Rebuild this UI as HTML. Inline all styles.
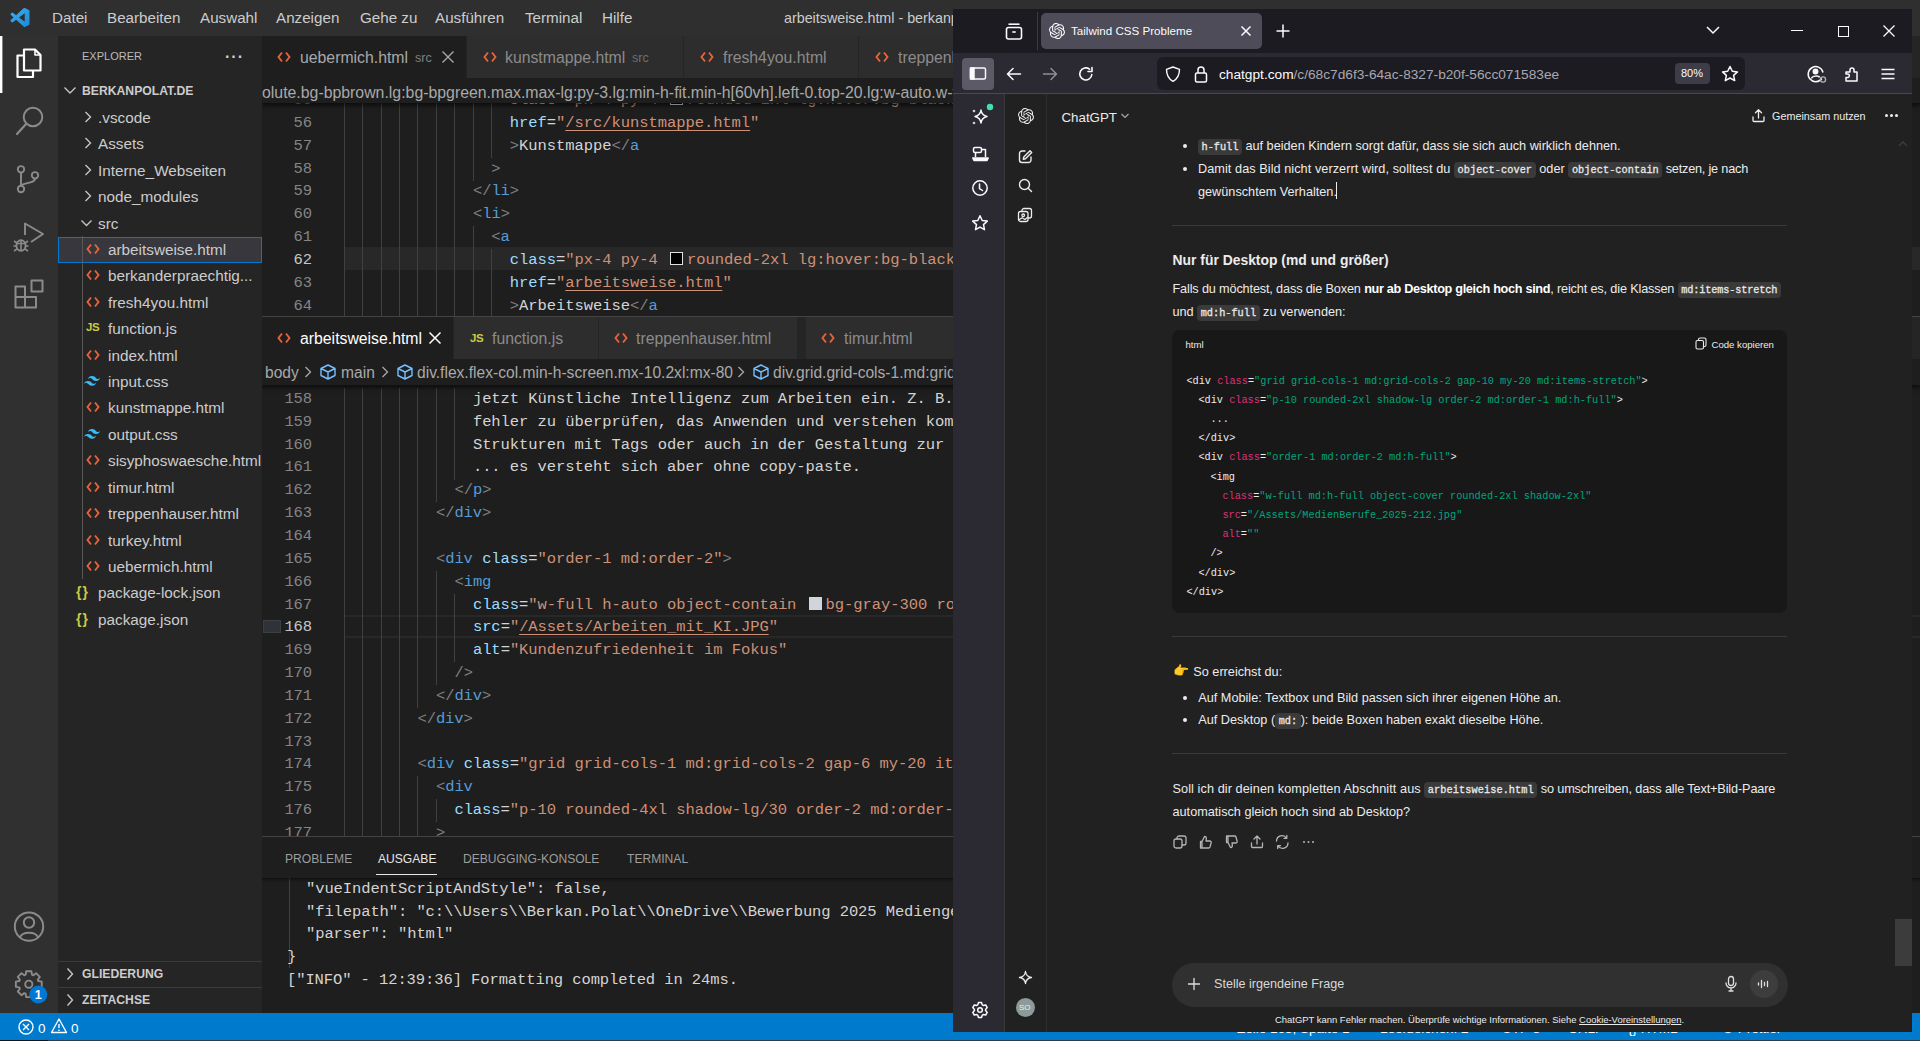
<!DOCTYPE html>
<html><head><meta charset="utf-8">
<style>
*{margin:0;padding:0;box-sizing:border-box}
html,body{width:1920px;height:1041px;overflow:hidden;background:#1e1e1e;font-family:"Liberation Sans",sans-serif;position:relative}
.a{position:absolute}
.t{position:absolute;white-space:pre;line-height:1}
.mono{font-family:"Liberation Mono",monospace}
/* vscode */
#title{left:0;top:0;width:1920px;height:36px;background:#2f2f2f}
#menu .t{top:10px;font-size:15.2px;color:#cccccc}
#act{left:0;top:36px;width:58px;height:977px;background:#303030}
#side{left:58px;top:36px;width:204px;height:977px;background:#252526}
#status{left:0;top:1013px;width:1920px;height:28px;background:#007acc}
.tree .t{font-size:15.3px;color:#cccccc}
.tabt{font-size:15.8px}
.crumb{font-size:15.6px;color:#a9a9a9}
.ptab{font-size:12.1px;margin-top:0.5px}
.ln{position:absolute;left:262px;width:50px;text-align:right;white-space:pre;font-family:"Liberation Mono",monospace;font-size:15.5px;letter-spacing:-0.1px;line-height:22.85px}
.cl{position:absolute;white-space:pre;font-family:"Liberation Mono",monospace;font-size:15.5px;letter-spacing:-0.06px;line-height:22.85px}
.pl{letter-spacing:-0.1px}
.cbox{display:inline-block;width:13px;height:13px;border:1px solid #fff;margin:0 4px 0 3px;vertical-align:-1px}
.body{font-size:12.7px;color:#ececec;margin-top:0.8px}
.body b{font-weight:700;color:#fff;letter-spacing:-0.32px}
.chip{font-family:"Liberation Mono",monospace;font-size:10.25px;background:#3a3a3a;border-radius:4px;padding:2px 3.5px;color:#e8e8e8;-webkit-text-stroke:0.3px #e8e8e8}
.bul{position:absolute;left:1182.5px;width:4.5px;height:4.5px;border-radius:50%;background:#ececec}
.hr{position:absolute;left:1172px;width:615px;height:1px;background:#3a3a3a}
.code div{position:absolute;white-space:pre;font-family:"Liberation Mono",monospace;font-size:10.25px;line-height:12px;margin-top:0.6px}
.code .w{color:#ececec}.code .r{color:#df3079}.code .g{color:#00a67d}
</style></head><body>

<!-- ============ VS CODE ============ -->
<div id="title" class="a"></div>
<svg class="a" style="left:10px;top:8px" width="20" height="19" viewBox="0 0 100 100"><defs><linearGradient id="vg" x1="0" y1="0" x2="1" y2="1"><stop offset="0" stop-color="#3fb0f0"/><stop offset="1" stop-color="#1a8ad8"/></linearGradient></defs><path fill="url(#vg)" fill-rule="evenodd" d="M70.912 99.572a6.2 6.2 0 0 0 4.97-.19l20.588-9.908a6.25 6.25 0 0 0 3.53-5.632V16.157a6.25 6.25 0 0 0-3.53-5.632L75.882.617a6.226 6.226 0 0 0-7.104 1.21L29.367 37.78 12.2 24.75a4.162 4.162 0 0 0-5.318.236l-5.507 5.009a4.168 4.168 0 0 0-.004 6.162L16.255 50 1.371 63.576a4.168 4.168 0 0 0 .004 6.162l5.507 5.009a4.162 4.162 0 0 0 5.318.236l17.167-13.03 39.41 35.954a6.218 6.218 0 0 0 2.135 1.365zm4.104-72.414L45.11 50l29.906 22.843V27.158z"/></svg>
<div id="menu">
  <div class="t" style="left:52px">Datei</div>
  <div class="t" style="left:107px">Bearbeiten</div>
  <div class="t" style="left:200px">Auswahl</div>
  <div class="t" style="left:276px">Anzeigen</div>
  <div class="t" style="left:360px">Gehe zu</div>
  <div class="t" style="left:435px">Ausführen</div>
  <div class="t" style="left:525px">Terminal</div>
  <div class="t" style="left:602px">Hilfe</div>
  <div class="t" style="left:784px;top:11px;font-size:14.3px">arbeitsweise.html - berkanpolat.de - Visual Studio Code</div>
</div>
<div id="act" class="a"></div>
<div id="side" class="a"></div>

<svg class="a" style="left:0;top:36px" width="58" height="977" viewBox="0 36 58 977" fill="none" stroke-linejoin="round">
  <rect x="0" y="36" width="2.4" height="57" fill="#ffffff" stroke="none"/>
  <path d="M23 55.5 H17.5 V77 H33 V71" stroke="#fff" stroke-width="2.2"/>
  <path d="M24 49.5 H35 L40.5 55 V70.5 H24 Z" stroke="#fff" stroke-width="2.2"/>
  <path d="M35 49.5 V55 H40.5" stroke="#fff" stroke-width="1.6"/>
  <circle cx="33" cy="117" r="9.3" stroke="#8b8b8b" stroke-width="2"/>
  <path d="M26.3 123.7 L17 134" stroke="#8b8b8b" stroke-width="2.2" stroke-linecap="round"/>
  <circle cx="21" cy="169.3" r="3.2" stroke="#8b8b8b" stroke-width="1.9"/>
  <circle cx="35" cy="175.3" r="3.2" stroke="#8b8b8b" stroke-width="1.9"/>
  <circle cx="21" cy="189" r="3.2" stroke="#8b8b8b" stroke-width="1.9"/>
  <path d="M21 172.5 V185.8 M35 178.5 C35 183 28 182 21.5 185" stroke="#8b8b8b" stroke-width="1.9"/>
  <path d="M25 235 V223.5 L43 234 L31 242" stroke="#8b8b8b" stroke-width="1.9"/>
  <ellipse cx="21" cy="245.5" rx="4.6" ry="5.2" stroke="#8b8b8b" stroke-width="1.9"/>
  <path d="M14 241 L17 243 M28 241 L25 243 M13.5 246 H16.5 M25.5 246 H28.5 M14 251 L17 249 M28 251 L25 249 M21 240 V250 M17 243.5 H25" stroke="#8b8b8b" stroke-width="1.6"/>
  <path d="M15.5 286.5 H25 V307.5 H15.5 Z M15.5 297 H36 V307.5 H25" stroke="#8b8b8b" stroke-width="2"/>
  <rect x="31.5" y="280.5" width="11" height="11" stroke="#8b8b8b" stroke-width="2"/>
  <circle cx="29" cy="926.6" r="14.2" stroke="#8b8b8b" stroke-width="2"/>
  <circle cx="29" cy="922.5" r="5.2" stroke="#8b8b8b" stroke-width="2"/>
  <path d="M20 937.5 C22 931 36 931 38 937.5" stroke="#8b8b8b" stroke-width="2"/>
  <path d="M25.65 974.71 L26.18 971.26 L31.42 971.26 L31.95 974.71 L33.29 975.26 L36.09 973.20 L39.80 976.91 L37.74 979.71 L38.29 981.05 L41.74 981.58 L41.74 986.82 L38.29 987.35 L37.74 988.69 L39.80 991.49 L36.09 995.20 L33.29 993.14 L31.95 993.69 L31.42 997.14 L26.18 997.14 L25.65 993.69 L24.31 993.14 L21.51 995.20 L17.80 991.49 L19.86 988.69 L19.31 987.35 L15.86 986.82 L15.86 981.58 L19.31 981.05 L19.86 979.71 L17.80 976.91 L21.51 973.20 L24.31 975.26 Z" stroke="#8b8b8b" stroke-width="1.9"/>
  <circle cx="28.8" cy="984.2" r="3.6" stroke="#8b8b8b" stroke-width="1.9"/>
  <circle cx="38.3" cy="994.5" r="9" fill="#0078d4" stroke="none"/>
  <text x="38.3" y="999.3" font-family="Liberation Sans" font-size="12.5" font-weight="700" fill="#fff" text-anchor="middle" stroke="none">1</text>
</svg>


<div class="tree">
  <div class="t" style="left:82px;top:51px;font-size:11px;color:#bbbbbb">EXPLORER</div>
  <div class="t" style="left:225px;top:49px;font-size:16px;color:#cccccc;font-weight:700;letter-spacing:1px">···</div>
  <svg class="a" style="left:62px;top:80px" width="16" height="20" fill="none" stroke="#c5c5c5" stroke-width="1.4"><path d="M2.5 7.5 L8 13 L13.5 7.5"/></svg>
  <div class="t" style="left:82px;top:85px;font-size:12.2px;font-weight:700;color:#cccccc">BERKANPOLAT.DE</div>
  <div class="a" style="left:58px;top:236.5px;width:204px;height:26px;background:#37373d;border:1px solid #0078d4"></div>
  <div class="a" style="left:82px;top:236px;width:1px;height:343px;background:#585858"></div>
  <svg class="a" style="left:82px;top:103.8px" width="12" height="26" fill="none" stroke="#c5c5c5" stroke-width="1.4"><path d="M3.5 8 L8.5 13 L3.5 18"/></svg><div class="t" style="left:98px;top:104.8px;line-height:26.4px">.vscode</div><svg class="a" style="left:82px;top:130.2px" width="12" height="26" fill="none" stroke="#c5c5c5" stroke-width="1.4"><path d="M3.5 8 L8.5 13 L3.5 18"/></svg><div class="t" style="left:98px;top:131.2px;line-height:26.4px">Assets</div><svg class="a" style="left:82px;top:156.6px" width="12" height="26" fill="none" stroke="#c5c5c5" stroke-width="1.4"><path d="M3.5 8 L8.5 13 L3.5 18"/></svg><div class="t" style="left:98px;top:157.6px;line-height:26.4px">Interne_Webseiten</div><svg class="a" style="left:82px;top:183.1px" width="12" height="26" fill="none" stroke="#c5c5c5" stroke-width="1.4"><path d="M3.5 8 L8.5 13 L3.5 18"/></svg><div class="t" style="left:98px;top:184.1px;line-height:26.4px">node_modules</div><svg class="a" style="left:80px;top:209.5px" width="14" height="26" fill="none" stroke="#c5c5c5" stroke-width="1.4"><path d="M1.5 10.5 L6.5 15.5 L11.5 10.5"/></svg><div class="t" style="left:98px;top:210.5px;line-height:26.4px">src</div><svg class="a" style="left:85px;top:235.9px" width="16" height="26" fill="none" stroke="#e8623a" stroke-width="1.9"><path d="M6 8.5 L2.5 13 L6 17.5 M10 8.5 L13.5 13 L10 17.5"/></svg><div class="t" style="left:108px;top:236.9px;line-height:26.4px">arbeitsweise.html</div><svg class="a" style="left:85px;top:262.3px" width="16" height="26" fill="none" stroke="#e8623a" stroke-width="1.9"><path d="M6 8.5 L2.5 13 L6 17.5 M10 8.5 L13.5 13 L10 17.5"/></svg><div class="t" style="left:108px;top:263.3px;line-height:26.4px">berkanderpraechtig...</div><svg class="a" style="left:85px;top:288.7px" width="16" height="26" fill="none" stroke="#e8623a" stroke-width="1.9"><path d="M6 8.5 L2.5 13 L6 17.5 M10 8.5 L13.5 13 L10 17.5"/></svg><div class="t" style="left:108px;top:289.7px;line-height:26.4px">fresh4you.html</div><div class="t" style="left:86px;top:322.2px;font-size:11.5px;font-weight:700;color:#cbcb41;letter-spacing:-0.5px">JS</div><div class="t" style="left:108px;top:316.2px;line-height:26.4px">function.js</div><svg class="a" style="left:85px;top:341.6px" width="16" height="26" fill="none" stroke="#e8623a" stroke-width="1.9"><path d="M6 8.5 L2.5 13 L6 17.5 M10 8.5 L13.5 13 L10 17.5"/></svg><div class="t" style="left:108px;top:342.6px;line-height:26.4px">index.html</div><svg class="a" style="left:83.5px;top:375.8px" width="16" height="10" viewBox="0 0 54 33"><path fill="#38bdf8" d="M27 0C19.8 0 15.3 3.6 13.5 10.8c2.7-3.6 5.85-4.95 9.45-4.05 2.054.513 3.522 2.004 5.147 3.653C30.744 13.09 33.808 16.2 40.5 16.2c7.2 0 11.7-3.6 13.5-10.8-2.7 3.6-5.85 4.95-9.45 4.050-2.054-.513-3.522-2.004-5.147-3.653C36.756 3.110 33.692 0 27 0zM13.5 16.2C6.3 16.2 1.8 19.8 0 27c2.7-3.6 5.85-4.95 9.45-4.05 2.054.514 3.522 2.004 5.147 3.653C17.244 29.290 20.308 32.4 27 32.4c7.2 0 11.7-3.6 13.5-10.8-2.7 3.6-5.85 4.95-9.45 4.05-2.054-.513-3.522-2.004-5.147-3.653C23.256 19.310 20.192 16.2 13.5 16.2z"/></svg><div class="t" style="left:108px;top:369.0px;line-height:26.4px">input.css</div><svg class="a" style="left:85px;top:394.4px" width="16" height="26" fill="none" stroke="#e8623a" stroke-width="1.9"><path d="M6 8.5 L2.5 13 L6 17.5 M10 8.5 L13.5 13 L10 17.5"/></svg><div class="t" style="left:108px;top:395.4px;line-height:26.4px">kunstmappe.html</div><svg class="a" style="left:83.5px;top:428.6px" width="16" height="10" viewBox="0 0 54 33"><path fill="#38bdf8" d="M27 0C19.8 0 15.3 3.6 13.5 10.8c2.7-3.6 5.85-4.95 9.45-4.05 2.054.513 3.522 2.004 5.147 3.653C30.744 13.09 33.808 16.2 40.5 16.2c7.2 0 11.7-3.6 13.5-10.8-2.7 3.6-5.85 4.95-9.45 4.050-2.054-.513-3.522-2.004-5.147-3.653C36.756 3.110 33.692 0 27 0zM13.5 16.2C6.3 16.2 1.8 19.8 0 27c2.7-3.6 5.85-4.95 9.45-4.05 2.054.514 3.522 2.004 5.147 3.653C17.244 29.290 20.308 32.4 27 32.4c7.2 0 11.7-3.6 13.5-10.8-2.7 3.6-5.85 4.95-9.45 4.05-2.054-.513-3.522-2.004-5.147-3.653C23.256 19.310 20.192 16.2 13.5 16.2z"/></svg><div class="t" style="left:108px;top:421.8px;line-height:26.4px">output.css</div><svg class="a" style="left:85px;top:447.3px" width="16" height="26" fill="none" stroke="#e8623a" stroke-width="1.9"><path d="M6 8.5 L2.5 13 L6 17.5 M10 8.5 L13.5 13 L10 17.5"/></svg><div class="t" style="left:108px;top:448.3px;line-height:26.4px">sisyphoswaesche.html</div><svg class="a" style="left:85px;top:473.7px" width="16" height="26" fill="none" stroke="#e8623a" stroke-width="1.9"><path d="M6 8.5 L2.5 13 L6 17.5 M10 8.5 L13.5 13 L10 17.5"/></svg><div class="t" style="left:108px;top:474.7px;line-height:26.4px">timur.html</div><svg class="a" style="left:85px;top:500.1px" width="16" height="26" fill="none" stroke="#e8623a" stroke-width="1.9"><path d="M6 8.5 L2.5 13 L6 17.5 M10 8.5 L13.5 13 L10 17.5"/></svg><div class="t" style="left:108px;top:501.1px;line-height:26.4px">treppenhauser.html</div><svg class="a" style="left:85px;top:526.5px" width="16" height="26" fill="none" stroke="#e8623a" stroke-width="1.9"><path d="M6 8.5 L2.5 13 L6 17.5 M10 8.5 L13.5 13 L10 17.5"/></svg><div class="t" style="left:108px;top:527.5px;line-height:26.4px">turkey.html</div><svg class="a" style="left:85px;top:552.9px" width="16" height="26" fill="none" stroke="#e8623a" stroke-width="1.9"><path d="M6 8.5 L2.5 13 L6 17.5 M10 8.5 L13.5 13 L10 17.5"/></svg><div class="t" style="left:108px;top:553.9px;line-height:26.4px">uebermich.html</div><div class="t" style="left:76px;top:585.4px;font-size:14px;font-weight:700;color:#cbcb41;letter-spacing:1px">{}</div><div class="t" style="left:98px;top:580.4px;line-height:26.4px">package-lock.json</div><div class="t" style="left:76px;top:611.8px;font-size:14px;font-weight:700;color:#cbcb41;letter-spacing:1px">{}</div><div class="t" style="left:98px;top:606.8px;line-height:26.4px">package.json</div>
  <div class="a" style="left:58px;top:961px;width:204px;height:1px;background:#3c3c3c"></div>
  <svg class="a" style="left:62px;top:964px" width="16" height="20" fill="none" stroke="#c5c5c5" stroke-width="1.4"><path d="M5.5 4.5 L10.5 10 L5.5 15.5"/></svg>
  <div class="t" style="left:82px;top:968px;font-size:12.2px;font-weight:700;color:#cccccc">GLIEDERUNG</div>
  <div class="a" style="left:58px;top:987px;width:204px;height:1px;background:#3c3c3c"></div>
  <svg class="a" style="left:62px;top:990px" width="16" height="20" fill="none" stroke="#c5c5c5" stroke-width="1.4"><path d="M5.5 4.5 L10.5 10 L5.5 15.5"/></svg>
  <div class="t" style="left:82px;top:994px;font-size:12.2px;font-weight:700;color:#cccccc">ZEITACHSE</div>
</div>
<!--EDITOR-->
<!-- top editor group -->
<div class="a" style="left:262px;top:36px;width:1658px;height:42px;background:#252526"></div>
<div class="a" style="left:262px;top:36px;width:204px;height:42px;background:#1e1e1e"></div>
<div class="a" style="left:467px;top:36px;width:216px;height:42px;background:#2d2d2d"></div>
<div class="a" style="left:684px;top:36px;width:174px;height:42px;background:#2d2d2d"></div>
<div class="a" style="left:859px;top:36px;width:200px;height:42px;background:#2d2d2d"></div>
<svg class="a" style="left:276px;top:44px" width="16" height="26" fill="none" stroke="#e8623a" stroke-width="1.9"><path d="M6 8.5 L2.5 13 L6 17.5 M10 8.5 L13.5 13 L10 17.5"/></svg>
<div class="t tabt" style="left:300px;top:50px;color:#a8a8a8">uebermich.html</div>
<div class="t" style="left:415px;top:52px;font-size:12.5px;color:#7f7f7f">src</div>
<svg class="a" style="left:440px;top:49px" width="16" height="16" fill="none" stroke="#a8a8a8" stroke-width="1.4"><path d="M2.5 2.5 L13.5 13.5 M13.5 2.5 L2.5 13.5"/></svg>
<svg class="a" style="left:482px;top:44px" width="16" height="26" fill="none" stroke="#e8623a" stroke-width="1.9"><path d="M6 8.5 L2.5 13 L6 17.5 M10 8.5 L13.5 13 L10 17.5"/></svg>
<div class="t tabt" style="left:505px;top:50px;color:#8b8b8b">kunstmappe.html</div>
<div class="t" style="left:632px;top:52px;font-size:12.5px;color:#6e6e6e">src</div>
<svg class="a" style="left:699px;top:44px" width="16" height="26" fill="none" stroke="#e8623a" stroke-width="1.9"><path d="M6 8.5 L2.5 13 L6 17.5 M10 8.5 L13.5 13 L10 17.5"/></svg>
<div class="t tabt" style="left:723px;top:50px;color:#8b8b8b">fresh4you.html</div>
<svg class="a" style="left:874px;top:44px" width="16" height="26" fill="none" stroke="#e8623a" stroke-width="1.9"><path d="M6 8.5 L2.5 13 L6 17.5 M10 8.5 L13.5 13 L10 17.5"/></svg>
<div class="t tabt" style="left:898px;top:50px;color:#8b8b8b">treppenhauser.html</div>
<div class="a" style="left:262px;top:78px;width:1658px;height:239px;background:#1e1e1e;overflow:hidden">
  <div class="a" style="left:-262px;top:-78px;width:1920px;height:1041px">
    <div class="a" style="left:343.5px;top:246.7px;width:1600px;height:22.85px;background:#282828"></div>
    <!--TOPCODE--><div class="a" style="left:343.5px;top:89.02px;width:1px;height:23.15px;background:#404040"></div><div class="a" style="left:362.0px;top:89.02px;width:1px;height:23.15px;background:#404040"></div><div class="a" style="left:380.5px;top:89.02px;width:1px;height:23.15px;background:#404040"></div><div class="a" style="left:398.9px;top:89.02px;width:1px;height:23.15px;background:#404040"></div><div class="a" style="left:417.4px;top:89.02px;width:1px;height:23.15px;background:#404040"></div><div class="a" style="left:435.9px;top:89.02px;width:1px;height:23.15px;background:#404040"></div><div class="a" style="left:454.4px;top:89.02px;width:1px;height:23.15px;background:#404040"></div><div class="a" style="left:472.9px;top:89.02px;width:1px;height:23.15px;background:#404040"></div><div class="a" style="left:491.3px;top:89.02px;width:1px;height:23.15px;background:#404040"></div><div class="a" style="left:343.5px;top:111.88px;width:1px;height:23.15px;background:#404040"></div><div class="a" style="left:362.0px;top:111.88px;width:1px;height:23.15px;background:#404040"></div><div class="a" style="left:380.5px;top:111.88px;width:1px;height:23.15px;background:#404040"></div><div class="a" style="left:398.9px;top:111.88px;width:1px;height:23.15px;background:#404040"></div><div class="a" style="left:417.4px;top:111.88px;width:1px;height:23.15px;background:#404040"></div><div class="a" style="left:435.9px;top:111.88px;width:1px;height:23.15px;background:#404040"></div><div class="a" style="left:454.4px;top:111.88px;width:1px;height:23.15px;background:#404040"></div><div class="a" style="left:472.9px;top:111.88px;width:1px;height:23.15px;background:#404040"></div><div class="a" style="left:491.3px;top:111.88px;width:1px;height:23.15px;background:#404040"></div><div class="a" style="left:343.5px;top:134.72px;width:1px;height:23.15px;background:#404040"></div><div class="a" style="left:362.0px;top:134.72px;width:1px;height:23.15px;background:#404040"></div><div class="a" style="left:380.5px;top:134.72px;width:1px;height:23.15px;background:#404040"></div><div class="a" style="left:398.9px;top:134.72px;width:1px;height:23.15px;background:#404040"></div><div class="a" style="left:417.4px;top:134.72px;width:1px;height:23.15px;background:#404040"></div><div class="a" style="left:435.9px;top:134.72px;width:1px;height:23.15px;background:#404040"></div><div class="a" style="left:454.4px;top:134.72px;width:1px;height:23.15px;background:#404040"></div><div class="a" style="left:472.9px;top:134.72px;width:1px;height:23.15px;background:#404040"></div><div class="a" style="left:491.3px;top:134.72px;width:1px;height:23.15px;background:#404040"></div><div class="a" style="left:343.5px;top:157.57px;width:1px;height:23.15px;background:#404040"></div><div class="a" style="left:362.0px;top:157.57px;width:1px;height:23.15px;background:#404040"></div><div class="a" style="left:380.5px;top:157.57px;width:1px;height:23.15px;background:#404040"></div><div class="a" style="left:398.9px;top:157.57px;width:1px;height:23.15px;background:#404040"></div><div class="a" style="left:417.4px;top:157.57px;width:1px;height:23.15px;background:#404040"></div><div class="a" style="left:435.9px;top:157.57px;width:1px;height:23.15px;background:#404040"></div><div class="a" style="left:454.4px;top:157.57px;width:1px;height:23.15px;background:#404040"></div><div class="a" style="left:472.9px;top:157.57px;width:1px;height:23.15px;background:#404040"></div><div class="a" style="left:343.5px;top:180.43px;width:1px;height:23.15px;background:#404040"></div><div class="a" style="left:362.0px;top:180.43px;width:1px;height:23.15px;background:#404040"></div><div class="a" style="left:380.5px;top:180.43px;width:1px;height:23.15px;background:#404040"></div><div class="a" style="left:398.9px;top:180.43px;width:1px;height:23.15px;background:#404040"></div><div class="a" style="left:417.4px;top:180.43px;width:1px;height:23.15px;background:#404040"></div><div class="a" style="left:435.9px;top:180.43px;width:1px;height:23.15px;background:#404040"></div><div class="a" style="left:454.4px;top:180.43px;width:1px;height:23.15px;background:#404040"></div><div class="a" style="left:343.5px;top:203.27px;width:1px;height:23.15px;background:#404040"></div><div class="a" style="left:362.0px;top:203.27px;width:1px;height:23.15px;background:#404040"></div><div class="a" style="left:380.5px;top:203.27px;width:1px;height:23.15px;background:#404040"></div><div class="a" style="left:398.9px;top:203.27px;width:1px;height:23.15px;background:#404040"></div><div class="a" style="left:417.4px;top:203.27px;width:1px;height:23.15px;background:#404040"></div><div class="a" style="left:435.9px;top:203.27px;width:1px;height:23.15px;background:#404040"></div><div class="a" style="left:454.4px;top:203.27px;width:1px;height:23.15px;background:#404040"></div><div class="a" style="left:343.5px;top:226.12px;width:1px;height:23.15px;background:#404040"></div><div class="a" style="left:362.0px;top:226.12px;width:1px;height:23.15px;background:#404040"></div><div class="a" style="left:380.5px;top:226.12px;width:1px;height:23.15px;background:#404040"></div><div class="a" style="left:398.9px;top:226.12px;width:1px;height:23.15px;background:#404040"></div><div class="a" style="left:417.4px;top:226.12px;width:1px;height:23.15px;background:#404040"></div><div class="a" style="left:435.9px;top:226.12px;width:1px;height:23.15px;background:#404040"></div><div class="a" style="left:454.4px;top:226.12px;width:1px;height:23.15px;background:#404040"></div><div class="a" style="left:472.9px;top:226.12px;width:1px;height:23.15px;background:#404040"></div><div class="a" style="left:343.5px;top:248.98px;width:1px;height:23.15px;background:#404040"></div><div class="a" style="left:362.0px;top:248.98px;width:1px;height:23.15px;background:#404040"></div><div class="a" style="left:380.5px;top:248.98px;width:1px;height:23.15px;background:#404040"></div><div class="a" style="left:398.9px;top:248.98px;width:1px;height:23.15px;background:#404040"></div><div class="a" style="left:417.4px;top:248.98px;width:1px;height:23.15px;background:#404040"></div><div class="a" style="left:435.9px;top:248.98px;width:1px;height:23.15px;background:#404040"></div><div class="a" style="left:454.4px;top:248.98px;width:1px;height:23.15px;background:#404040"></div><div class="a" style="left:472.9px;top:248.98px;width:1px;height:23.15px;background:#404040"></div><div class="a" style="left:491.3px;top:248.98px;width:1px;height:23.15px;background:#404040"></div><div class="a" style="left:343.5px;top:271.82px;width:1px;height:23.15px;background:#404040"></div><div class="a" style="left:362.0px;top:271.82px;width:1px;height:23.15px;background:#404040"></div><div class="a" style="left:380.5px;top:271.82px;width:1px;height:23.15px;background:#404040"></div><div class="a" style="left:398.9px;top:271.82px;width:1px;height:23.15px;background:#404040"></div><div class="a" style="left:417.4px;top:271.82px;width:1px;height:23.15px;background:#404040"></div><div class="a" style="left:435.9px;top:271.82px;width:1px;height:23.15px;background:#404040"></div><div class="a" style="left:454.4px;top:271.82px;width:1px;height:23.15px;background:#404040"></div><div class="a" style="left:472.9px;top:271.82px;width:1px;height:23.15px;background:#404040"></div><div class="a" style="left:491.3px;top:271.82px;width:1px;height:23.15px;background:#404040"></div><div class="a" style="left:343.5px;top:294.68px;width:1px;height:23.15px;background:#404040"></div><div class="a" style="left:362.0px;top:294.68px;width:1px;height:23.15px;background:#404040"></div><div class="a" style="left:380.5px;top:294.68px;width:1px;height:23.15px;background:#404040"></div><div class="a" style="left:398.9px;top:294.68px;width:1px;height:23.15px;background:#404040"></div><div class="a" style="left:417.4px;top:294.68px;width:1px;height:23.15px;background:#404040"></div><div class="a" style="left:435.9px;top:294.68px;width:1px;height:23.15px;background:#404040"></div><div class="a" style="left:454.4px;top:294.68px;width:1px;height:23.15px;background:#404040"></div><div class="a" style="left:472.9px;top:294.68px;width:1px;height:23.15px;background:#404040"></div><div class="a" style="left:491.3px;top:294.68px;width:1px;height:23.15px;background:#404040"></div><div class="ln" style="top:89.02px;color:#858585">55</div><div class="cl" style="left:509.8px;top:89.02px"><span style="color:#9cdcfe">class</span><span style="color:#d4d4d4">=</span><span style="color:#ce9178">&quot;px-4 py-4 </span><span class="cbox" style="background:#000;border-color:#e0e0e0"></span><span style="color:#ce9178">rounded-2xl lg:hover:bg-black</span></div><div class="ln" style="top:111.88px;color:#858585">56</div><div class="cl" style="left:509.8px;top:111.88px"><span style="color:#9cdcfe">href</span><span style="color:#d4d4d4">=</span><span style="color:#ce9178">&quot;</span><span style="color:#ce9178;text-decoration:underline;text-underline-offset:3px;text-decoration-thickness:1px">/src/kunstmappe.html</span><span style="color:#ce9178">&quot;</span></div><div class="ln" style="top:134.72px;color:#858585">57</div><div class="cl" style="left:509.8px;top:134.72px"><span style="color:#808080">&gt;</span><span style="color:#d4d4d4">Kunstmappe</span><span style="color:#808080">&lt;/</span><span style="color:#569cd6">a</span></div><div class="ln" style="top:157.57px;color:#858585">58</div><div class="cl" style="left:491.3px;top:157.57px"><span style="color:#808080">&gt;</span></div><div class="ln" style="top:180.43px;color:#858585">59</div><div class="cl" style="left:472.9px;top:180.43px"><span style="color:#808080">&lt;/</span><span style="color:#569cd6">li</span><span style="color:#808080">&gt;</span></div><div class="ln" style="top:203.27px;color:#858585">60</div><div class="cl" style="left:472.9px;top:203.27px"><span style="color:#808080">&lt;</span><span style="color:#569cd6">li</span><span style="color:#808080">&gt;</span></div><div class="ln" style="top:226.12px;color:#858585">61</div><div class="cl" style="left:491.3px;top:226.12px"><span style="color:#808080">&lt;</span><span style="color:#569cd6">a</span></div><div class="ln" style="top:248.98px;color:#c6c6c6">62</div><div class="cl" style="left:509.8px;top:248.98px"><span style="color:#9cdcfe">class</span><span style="color:#d4d4d4">=</span><span style="color:#ce9178">&quot;px-4 py-4 </span><span class="cbox" style="background:#000;border-color:#e0e0e0"></span><span style="color:#ce9178">rounded-2xl lg:hover:bg-black</span></div><div class="ln" style="top:271.82px;color:#858585">63</div><div class="cl" style="left:509.8px;top:271.82px"><span style="color:#9cdcfe">href</span><span style="color:#d4d4d4">=</span><span style="color:#ce9178">&quot;</span><span style="color:#ce9178;text-decoration:underline;text-underline-offset:3px;text-decoration-thickness:1px">arbeitsweise.html</span><span style="color:#ce9178">&quot;</span></div><div class="ln" style="top:294.68px;color:#858585">64</div><div class="cl" style="left:509.8px;top:294.68px"><span style="color:#808080">&gt;</span><span style="color:#d4d4d4">Arbeitsweise</span><span style="color:#808080">&lt;/</span><span style="color:#569cd6">a</span></div><!--/TOPCODE-->
  </div>
  <div class="a" style="left:0;top:0;width:1658px;height:25px;background:#1e1e1e;box-shadow:0 3px 4px rgba(0,0,0,0.55)"></div>
  <div class="t crumb" style="left:0;top:6.5px;font-size:15.85px">olute.bg-bpbrown.lg:bg-bpgreen.max.max-lg:py-3.lg:min-h-fit.min-h[60vh].left-0.top-20.lg:w-auto.w-full.lg:bg-bpgreen</div>
</div>
<div class="a" style="left:262px;top:316px;width:1658px;height:1px;background:#444444"></div>

<!-- bottom editor group -->
<div class="a" style="left:262px;top:317px;width:1658px;height:42px;background:#252526"></div>
<div class="a" style="left:262px;top:317px;width:191px;height:42px;background:#1e1e1e"></div>
<div class="a" style="left:454px;top:317px;width:144px;height:42px;background:#2d2d2d"></div>
<div class="a" style="left:599px;top:317px;width:198px;height:42px;background:#2d2d2d"></div>
<div class="a" style="left:806px;top:317px;width:160px;height:42px;background:#2d2d2d"></div>
<svg class="a" style="left:276px;top:325px" width="16" height="26" fill="none" stroke="#e8623a" stroke-width="1.9"><path d="M6 8.5 L2.5 13 L6 17.5 M10 8.5 L13.5 13 L10 17.5"/></svg>
<div class="t tabt" style="left:300px;top:331px;color:#ffffff">arbeitsweise.html</div>
<svg class="a" style="left:427px;top:330px" width="16" height="16" fill="none" stroke="#ffffff" stroke-width="1.5"><path d="M2.5 2.5 L13.5 13.5 M13.5 2.5 L2.5 13.5"/></svg>
<div class="t" style="left:470px;top:333px;font-size:11.5px;font-weight:700;color:#cbcb41;letter-spacing:-0.5px">JS</div>
<div class="t tabt" style="left:492px;top:331px;color:#8b8b8b">function.js</div>
<svg class="a" style="left:613px;top:325px" width="16" height="26" fill="none" stroke="#e8623a" stroke-width="1.9"><path d="M6 8.5 L2.5 13 L6 17.5 M10 8.5 L13.5 13 L10 17.5"/></svg>
<div class="t tabt" style="left:636px;top:331px;color:#8b8b8b">treppenhauser.html</div>
<svg class="a" style="left:820px;top:325px" width="16" height="26" fill="none" stroke="#e8623a" stroke-width="1.9"><path d="M6 8.5 L2.5 13 L6 17.5 M10 8.5 L13.5 13 L10 17.5"/></svg>
<div class="t tabt" style="left:844px;top:331px;color:#8b8b8b">timur.html</div>
<div class="a" style="left:262px;top:359px;width:1658px;height:477px;background:#1e1e1e;overflow:hidden">
  <div class="a" style="left:-262px;top:-359px;width:1920px;height:1041px">
    <div class="a" style="left:343.5px;top:614.7px;width:1600px;height:22.85px;border-top:2px solid #282828;border-bottom:2px solid #282828"></div>
    <div class="a" style="left:263px;top:620px;width:18px;height:13px;background:#2f3337;border:1px solid #3a3f44"></div>
    <!--BOTCODE--><div class="a" style="left:343.5px;top:387.88px;width:1px;height:23.15px;background:#404040"></div><div class="a" style="left:362.0px;top:387.88px;width:1px;height:23.15px;background:#404040"></div><div class="a" style="left:380.5px;top:387.88px;width:1px;height:23.15px;background:#404040"></div><div class="a" style="left:398.9px;top:387.88px;width:1px;height:23.15px;background:#404040"></div><div class="a" style="left:417.4px;top:387.88px;width:1px;height:23.15px;background:#404040"></div><div class="a" style="left:435.9px;top:387.88px;width:1px;height:23.15px;background:#404040"></div><div class="a" style="left:454.4px;top:387.88px;width:1px;height:23.15px;background:#404040"></div><div class="a" style="left:343.5px;top:410.73px;width:1px;height:23.15px;background:#404040"></div><div class="a" style="left:362.0px;top:410.73px;width:1px;height:23.15px;background:#404040"></div><div class="a" style="left:380.5px;top:410.73px;width:1px;height:23.15px;background:#404040"></div><div class="a" style="left:398.9px;top:410.73px;width:1px;height:23.15px;background:#404040"></div><div class="a" style="left:417.4px;top:410.73px;width:1px;height:23.15px;background:#404040"></div><div class="a" style="left:435.9px;top:410.73px;width:1px;height:23.15px;background:#404040"></div><div class="a" style="left:454.4px;top:410.73px;width:1px;height:23.15px;background:#404040"></div><div class="a" style="left:343.5px;top:433.57px;width:1px;height:23.15px;background:#404040"></div><div class="a" style="left:362.0px;top:433.57px;width:1px;height:23.15px;background:#404040"></div><div class="a" style="left:380.5px;top:433.57px;width:1px;height:23.15px;background:#404040"></div><div class="a" style="left:398.9px;top:433.57px;width:1px;height:23.15px;background:#404040"></div><div class="a" style="left:417.4px;top:433.57px;width:1px;height:23.15px;background:#404040"></div><div class="a" style="left:435.9px;top:433.57px;width:1px;height:23.15px;background:#404040"></div><div class="a" style="left:454.4px;top:433.57px;width:1px;height:23.15px;background:#404040"></div><div class="a" style="left:343.5px;top:456.43px;width:1px;height:23.15px;background:#404040"></div><div class="a" style="left:362.0px;top:456.43px;width:1px;height:23.15px;background:#404040"></div><div class="a" style="left:380.5px;top:456.43px;width:1px;height:23.15px;background:#404040"></div><div class="a" style="left:398.9px;top:456.43px;width:1px;height:23.15px;background:#404040"></div><div class="a" style="left:417.4px;top:456.43px;width:1px;height:23.15px;background:#404040"></div><div class="a" style="left:435.9px;top:456.43px;width:1px;height:23.15px;background:#404040"></div><div class="a" style="left:454.4px;top:456.43px;width:1px;height:23.15px;background:#404040"></div><div class="a" style="left:343.5px;top:479.27px;width:1px;height:23.15px;background:#404040"></div><div class="a" style="left:362.0px;top:479.27px;width:1px;height:23.15px;background:#404040"></div><div class="a" style="left:380.5px;top:479.27px;width:1px;height:23.15px;background:#404040"></div><div class="a" style="left:398.9px;top:479.27px;width:1px;height:23.15px;background:#404040"></div><div class="a" style="left:417.4px;top:479.27px;width:1px;height:23.15px;background:#404040"></div><div class="a" style="left:435.9px;top:479.27px;width:1px;height:23.15px;background:#404040"></div><div class="a" style="left:343.5px;top:502.12px;width:1px;height:23.15px;background:#404040"></div><div class="a" style="left:362.0px;top:502.12px;width:1px;height:23.15px;background:#404040"></div><div class="a" style="left:380.5px;top:502.12px;width:1px;height:23.15px;background:#404040"></div><div class="a" style="left:398.9px;top:502.12px;width:1px;height:23.15px;background:#404040"></div><div class="a" style="left:417.4px;top:502.12px;width:1px;height:23.15px;background:#404040"></div><div class="a" style="left:343.5px;top:524.98px;width:1px;height:23.15px;background:#404040"></div><div class="a" style="left:362.0px;top:524.98px;width:1px;height:23.15px;background:#404040"></div><div class="a" style="left:380.5px;top:524.98px;width:1px;height:23.15px;background:#404040"></div><div class="a" style="left:398.9px;top:524.98px;width:1px;height:23.15px;background:#404040"></div><div class="a" style="left:417.4px;top:524.98px;width:1px;height:23.15px;background:#404040"></div><div class="a" style="left:343.5px;top:547.83px;width:1px;height:23.15px;background:#404040"></div><div class="a" style="left:362.0px;top:547.83px;width:1px;height:23.15px;background:#404040"></div><div class="a" style="left:380.5px;top:547.83px;width:1px;height:23.15px;background:#404040"></div><div class="a" style="left:398.9px;top:547.83px;width:1px;height:23.15px;background:#404040"></div><div class="a" style="left:417.4px;top:547.83px;width:1px;height:23.15px;background:#404040"></div><div class="a" style="left:343.5px;top:570.67px;width:1px;height:23.15px;background:#404040"></div><div class="a" style="left:362.0px;top:570.67px;width:1px;height:23.15px;background:#404040"></div><div class="a" style="left:380.5px;top:570.67px;width:1px;height:23.15px;background:#404040"></div><div class="a" style="left:398.9px;top:570.67px;width:1px;height:23.15px;background:#404040"></div><div class="a" style="left:417.4px;top:570.67px;width:1px;height:23.15px;background:#404040"></div><div class="a" style="left:435.9px;top:570.67px;width:1px;height:23.15px;background:#404040"></div><div class="a" style="left:343.5px;top:593.52px;width:1px;height:23.15px;background:#404040"></div><div class="a" style="left:362.0px;top:593.52px;width:1px;height:23.15px;background:#404040"></div><div class="a" style="left:380.5px;top:593.52px;width:1px;height:23.15px;background:#404040"></div><div class="a" style="left:398.9px;top:593.52px;width:1px;height:23.15px;background:#404040"></div><div class="a" style="left:417.4px;top:593.52px;width:1px;height:23.15px;background:#404040"></div><div class="a" style="left:435.9px;top:593.52px;width:1px;height:23.15px;background:#404040"></div><div class="a" style="left:454.4px;top:593.52px;width:1px;height:23.15px;background:#404040"></div><div class="a" style="left:343.5px;top:616.38px;width:1px;height:23.15px;background:#404040"></div><div class="a" style="left:362.0px;top:616.38px;width:1px;height:23.15px;background:#404040"></div><div class="a" style="left:380.5px;top:616.38px;width:1px;height:23.15px;background:#404040"></div><div class="a" style="left:398.9px;top:616.38px;width:1px;height:23.15px;background:#404040"></div><div class="a" style="left:417.4px;top:616.38px;width:1px;height:23.15px;background:#404040"></div><div class="a" style="left:435.9px;top:616.38px;width:1px;height:23.15px;background:#404040"></div><div class="a" style="left:454.4px;top:616.38px;width:1px;height:23.15px;background:#404040"></div><div class="a" style="left:343.5px;top:639.23px;width:1px;height:23.15px;background:#404040"></div><div class="a" style="left:362.0px;top:639.23px;width:1px;height:23.15px;background:#404040"></div><div class="a" style="left:380.5px;top:639.23px;width:1px;height:23.15px;background:#404040"></div><div class="a" style="left:398.9px;top:639.23px;width:1px;height:23.15px;background:#404040"></div><div class="a" style="left:417.4px;top:639.23px;width:1px;height:23.15px;background:#404040"></div><div class="a" style="left:435.9px;top:639.23px;width:1px;height:23.15px;background:#404040"></div><div class="a" style="left:454.4px;top:639.23px;width:1px;height:23.15px;background:#404040"></div><div class="a" style="left:343.5px;top:662.08px;width:1px;height:23.15px;background:#404040"></div><div class="a" style="left:362.0px;top:662.08px;width:1px;height:23.15px;background:#404040"></div><div class="a" style="left:380.5px;top:662.08px;width:1px;height:23.15px;background:#404040"></div><div class="a" style="left:398.9px;top:662.08px;width:1px;height:23.15px;background:#404040"></div><div class="a" style="left:417.4px;top:662.08px;width:1px;height:23.15px;background:#404040"></div><div class="a" style="left:435.9px;top:662.08px;width:1px;height:23.15px;background:#404040"></div><div class="a" style="left:343.5px;top:684.92px;width:1px;height:23.15px;background:#404040"></div><div class="a" style="left:362.0px;top:684.92px;width:1px;height:23.15px;background:#404040"></div><div class="a" style="left:380.5px;top:684.92px;width:1px;height:23.15px;background:#404040"></div><div class="a" style="left:398.9px;top:684.92px;width:1px;height:23.15px;background:#404040"></div><div class="a" style="left:417.4px;top:684.92px;width:1px;height:23.15px;background:#404040"></div><div class="a" style="left:343.5px;top:707.78px;width:1px;height:23.15px;background:#404040"></div><div class="a" style="left:362.0px;top:707.78px;width:1px;height:23.15px;background:#404040"></div><div class="a" style="left:380.5px;top:707.78px;width:1px;height:23.15px;background:#404040"></div><div class="a" style="left:398.9px;top:707.78px;width:1px;height:23.15px;background:#404040"></div><div class="a" style="left:343.5px;top:730.62px;width:1px;height:23.15px;background:#404040"></div><div class="a" style="left:362.0px;top:730.62px;width:1px;height:23.15px;background:#404040"></div><div class="a" style="left:380.5px;top:730.62px;width:1px;height:23.15px;background:#404040"></div><div class="a" style="left:398.9px;top:730.62px;width:1px;height:23.15px;background:#404040"></div><div class="a" style="left:343.5px;top:753.48px;width:1px;height:23.15px;background:#404040"></div><div class="a" style="left:362.0px;top:753.48px;width:1px;height:23.15px;background:#404040"></div><div class="a" style="left:380.5px;top:753.48px;width:1px;height:23.15px;background:#404040"></div><div class="a" style="left:398.9px;top:753.48px;width:1px;height:23.15px;background:#404040"></div><div class="a" style="left:343.5px;top:776.33px;width:1px;height:23.15px;background:#404040"></div><div class="a" style="left:362.0px;top:776.33px;width:1px;height:23.15px;background:#404040"></div><div class="a" style="left:380.5px;top:776.33px;width:1px;height:23.15px;background:#404040"></div><div class="a" style="left:398.9px;top:776.33px;width:1px;height:23.15px;background:#404040"></div><div class="a" style="left:417.4px;top:776.33px;width:1px;height:23.15px;background:#404040"></div><div class="a" style="left:343.5px;top:799.17px;width:1px;height:23.15px;background:#404040"></div><div class="a" style="left:362.0px;top:799.17px;width:1px;height:23.15px;background:#404040"></div><div class="a" style="left:380.5px;top:799.17px;width:1px;height:23.15px;background:#404040"></div><div class="a" style="left:398.9px;top:799.17px;width:1px;height:23.15px;background:#404040"></div><div class="a" style="left:417.4px;top:799.17px;width:1px;height:23.15px;background:#404040"></div><div class="a" style="left:435.9px;top:799.17px;width:1px;height:23.15px;background:#404040"></div><div class="a" style="left:343.5px;top:822.03px;width:1px;height:23.15px;background:#404040"></div><div class="a" style="left:362.0px;top:822.03px;width:1px;height:23.15px;background:#404040"></div><div class="a" style="left:380.5px;top:822.03px;width:1px;height:23.15px;background:#404040"></div><div class="a" style="left:398.9px;top:822.03px;width:1px;height:23.15px;background:#404040"></div><div class="a" style="left:417.4px;top:822.03px;width:1px;height:23.15px;background:#404040"></div><div class="ln" style="top:387.88px;color:#858585">158</div><div class="cl" style="left:472.9px;top:387.88px"><span style="color:#d4d4d4">jetzt Künstliche Intelligenz zum Arbeiten ein. Z. B. die Code</span></div><div class="ln" style="top:410.73px;color:#858585">159</div><div class="cl" style="left:472.9px;top:410.73px"><span style="color:#d4d4d4">fehler zu überprüfen, das Anwenden und verstehen komplexer</span></div><div class="ln" style="top:433.57px;color:#858585">160</div><div class="cl" style="left:472.9px;top:433.57px"><span style="color:#d4d4d4">Strukturen mit Tags oder auch in der Gestaltung zur Inspiration</span></div><div class="ln" style="top:456.43px;color:#858585">161</div><div class="cl" style="left:472.9px;top:456.43px"><span style="color:#d4d4d4">... es versteht sich aber ohne copy-paste.</span></div><div class="ln" style="top:479.27px;color:#858585">162</div><div class="cl" style="left:454.4px;top:479.27px"><span style="color:#808080">&lt;/</span><span style="color:#569cd6">p</span><span style="color:#808080">&gt;</span></div><div class="ln" style="top:502.12px;color:#858585">163</div><div class="cl" style="left:435.9px;top:502.12px"><span style="color:#808080">&lt;/</span><span style="color:#569cd6">div</span><span style="color:#808080">&gt;</span></div><div class="ln" style="top:524.98px;color:#858585">164</div><div class="ln" style="top:547.83px;color:#858585">165</div><div class="cl" style="left:435.9px;top:547.83px"><span style="color:#808080">&lt;</span><span style="color:#569cd6">div</span><span style="color:#d4d4d4"> </span><span style="color:#9cdcfe">class</span><span style="color:#d4d4d4">=</span><span style="color:#ce9178">&quot;order-1 md:order-2&quot;</span><span style="color:#808080">&gt;</span></div><div class="ln" style="top:570.67px;color:#858585">166</div><div class="cl" style="left:454.4px;top:570.67px"><span style="color:#808080">&lt;</span><span style="color:#569cd6">img</span></div><div class="ln" style="top:593.52px;color:#858585">167</div><div class="cl" style="left:472.9px;top:593.52px"><span style="color:#9cdcfe">class</span><span style="color:#d4d4d4">=</span><span style="color:#ce9178">&quot;w-full h-auto object-contain </span><span class="cbox" style="background:#d1d5db;border-color:#d1d5db"></span><span style="color:#ce9178">bg-gray-300 rounded-2xl</span></div><div class="ln" style="top:616.38px;color:#c6c6c6">168</div><div class="cl" style="left:472.9px;top:616.38px"><span style="color:#9cdcfe">src</span><span style="color:#d4d4d4">=</span><span style="color:#ce9178">&quot;</span><span style="color:#ce9178;text-decoration:underline;text-underline-offset:3px;text-decoration-thickness:1px">/Assets/Arbeiten_mit_KI.JPG</span><span style="color:#ce9178">&quot;</span></div><div class="ln" style="top:639.23px;color:#858585">169</div><div class="cl" style="left:472.9px;top:639.23px"><span style="color:#9cdcfe">alt</span><span style="color:#d4d4d4">=</span><span style="color:#ce9178">&quot;Kundenzufriedenheit im Fokus&quot;</span></div><div class="ln" style="top:662.08px;color:#858585">170</div><div class="cl" style="left:454.4px;top:662.08px"><span style="color:#808080">/&gt;</span></div><div class="ln" style="top:684.92px;color:#858585">171</div><div class="cl" style="left:435.9px;top:684.92px"><span style="color:#808080">&lt;/</span><span style="color:#569cd6">div</span><span style="color:#808080">&gt;</span></div><div class="ln" style="top:707.78px;color:#858585">172</div><div class="cl" style="left:417.4px;top:707.78px"><span style="color:#808080">&lt;/</span><span style="color:#569cd6">div</span><span style="color:#808080">&gt;</span></div><div class="ln" style="top:730.62px;color:#858585">173</div><div class="ln" style="top:753.48px;color:#858585">174</div><div class="cl" style="left:417.4px;top:753.48px"><span style="color:#808080">&lt;</span><span style="color:#569cd6">div</span><span style="color:#d4d4d4"> </span><span style="color:#9cdcfe">class</span><span style="color:#d4d4d4">=</span><span style="color:#ce9178">&quot;grid grid-cols-1 md:grid-cols-2 gap-6 my-20 items-center&quot;</span><span style="color:#808080">&gt;</span></div><div class="ln" style="top:776.33px;color:#858585">175</div><div class="cl" style="left:435.9px;top:776.33px"><span style="color:#808080">&lt;</span><span style="color:#569cd6">div</span></div><div class="ln" style="top:799.17px;color:#858585">176</div><div class="cl" style="left:454.4px;top:799.17px"><span style="color:#9cdcfe">class</span><span style="color:#d4d4d4">=</span><span style="color:#ce9178">&quot;p-10 rounded-4xl shadow-lg/30 order-2 md:order-1&quot;</span></div><div class="ln" style="top:822.03px;color:#858585">177</div><div class="cl" style="left:435.9px;top:822.03px"><span style="color:#808080">&gt;</span></div><!--/BOTCODE-->
  </div>
  <div class="a" style="left:0;top:0;width:1658px;height:26px;background:#1e1e1e;box-shadow:0 3px 4px rgba(0,0,0,0.55)"></div>
  <div class="t crumb" style="left:3px;top:6px">body</div>
  <svg class="a" style="left:40px;top:4px" width="12" height="18" fill="none" stroke="#a9a9a9" stroke-width="1.3"><path d="M3.5 4 L8.5 9 L3.5 14"/></svg>
  <svg class="a" style="left:57px;top:4px" width="18" height="18" fill="none" stroke="#75beff" stroke-width="1.4" stroke-linejoin="round"><path d="M9 2 L16 5.5 V12.5 L9 16 L2 12.5 V5.5 Z M2 5.5 L9 9 L16 5.5 M9 9 V16"/></svg>
  <div class="t crumb" style="left:79px;top:6px">main</div>
  <svg class="a" style="left:117px;top:4px" width="12" height="18" fill="none" stroke="#a9a9a9" stroke-width="1.3"><path d="M3.5 4 L8.5 9 L3.5 14"/></svg>
  <svg class="a" style="left:134px;top:4px" width="18" height="18" fill="none" stroke="#75beff" stroke-width="1.4" stroke-linejoin="round"><path d="M9 2 L16 5.5 V12.5 L9 16 L2 12.5 V5.5 Z M2 5.5 L9 9 L16 5.5 M9 9 V16"/></svg>
  <div class="t crumb" style="left:155px;top:6px">div.flex.flex-col.min-h-screen.mx-10.2xl:mx-80</div>
  <svg class="a" style="left:473px;top:4px" width="12" height="18" fill="none" stroke="#a9a9a9" stroke-width="1.3"><path d="M3.5 4 L8.5 9 L3.5 14"/></svg>
  <svg class="a" style="left:490px;top:4px" width="18" height="18" fill="none" stroke="#75beff" stroke-width="1.4" stroke-linejoin="round"><path d="M9 2 L16 5.5 V12.5 L9 16 L2 12.5 V5.5 Z M2 5.5 L9 9 L16 5.5 M9 9 V16"/></svg>
  <div class="t crumb" style="left:511px;top:6px">div.grid.grid-cols-1.md:grid-cols-2.gap-10.my-20</div>
</div>

<!-- panel -->
<div class="a" style="left:262px;top:836px;width:1658px;height:177px;background:#1e1e1e;border-top:1px solid #444"></div>
<div class="t ptab" style="left:285px;top:852px;color:#9d9d9d">PROBLEME</div>
<div class="t ptab" style="left:378px;top:852px;color:#e7e7e7">AUSGABE</div>
<div class="a" style="left:376px;top:873.5px;width:61px;height:1.5px;background:#e7e7e7"></div>
<div class="t ptab" style="left:463px;top:852px;color:#9d9d9d">DEBUGGING-KONSOLE</div>
<div class="t ptab" style="left:627px;top:852px;color:#9d9d9d">TERMINAL</div>
<div class="a" style="left:289px;top:878px;width:1px;height:90px;background:#404040"></div>
<div class="cl pl" style="left:306px;top:877.5px;color:#d4d4d4">"vueIndentScriptAndStyle": false,</div>
<div class="cl pl" style="left:306px;top:900.5px;color:#d4d4d4">"filepath": "c:\\Users\\Berkan.Polat\\OneDrive\\Bewerbung 2025 Mediengestalter\\berkanpolat.de\\src\\arbeitsweise.html",</div>
<div class="cl pl" style="left:306px;top:922.5px;color:#d4d4d4">"parser": "html"</div>
<div class="cl pl" style="left:287px;top:945.5px;color:#d4d4d4">}</div>
<div class="cl pl" style="left:287px;top:968.5px;color:#d4d4d4">["INFO" - 12:39:36] Formatting completed in 24ms.</div>
<div class="a" style="left:262px;top:878px;width:1658px;height:4px;background:linear-gradient(rgba(0,0,0,0.45),rgba(0,0,0,0))"></div>

<div id="status" class="a"></div>
<!-- status bar items -->
<svg class="a" style="left:17px;top:1018px" width="18" height="18" fill="none" stroke="#fff" stroke-width="1.4"><circle cx="9" cy="9" r="7"/><path d="M6 6 L12 12 M12 6 L6 12"/></svg>
<div class="t" style="left:38px;top:1022px;font-size:13.5px;color:#fff">0</div>
<svg class="a" style="left:50px;top:1017px" width="18" height="18" fill="none" stroke="#fff" stroke-width="1.4" stroke-linejoin="round"><path d="M9 2 L16.5 15.5 H1.5 Z M9 7 V11 M9 12.5 V14"/></svg>
<div class="t" style="left:71px;top:1022px;font-size:13.5px;color:#fff">0</div>
<div class="t" style="left:1237px;top:1022px;font-size:13.5px;color:#fff">Zeile 168, Spalte 1</div>
<div class="t" style="left:1380px;top:1022px;font-size:13.5px;color:#fff">Leerzeichen: 2</div>
<div class="t" style="left:1502px;top:1022px;font-size:13.5px;color:#fff">UTF-8</div>
<div class="t" style="left:1568px;top:1022px;font-size:13.5px;color:#fff">CRLF</div>
<div class="t" style="left:1628px;top:1022px;font-size:13.5px;color:#fff">{} HTML</div>
<div class="t" style="left:1722px;top:1022px;font-size:13.5px;color:#fff">⊘ Prettier</div>
<div class="a" style="left:0;top:1039.6px;width:48px;height:1.4px;background:#101418"></div>
<div class="a" style="left:48px;top:1039.6px;width:1872px;height:1.4px;background:#2e3a44"></div>



<!--BROWSER--><!-- ============ FIREFOX ============ -->
<div class="a" style="left:953px;top:9px;width:959px;height:1023px;background:#212121;overflow:hidden">
<div class="a" style="left:-953px;top:-9px;width:1920px;height:1041px">
  <!-- tab strip -->
  <div class="a" style="left:953px;top:9px;width:959px;height:44px;background:#1c1b22"></div>
  <svg class="a" style="left:1004px;top:21px" width="20" height="20" fill="none" stroke="#fbfbfe" stroke-width="1.6" stroke-linejoin="round"><path d="M4.5 3.2 H15.5"/><rect x="2.5" y="6.5" width="15" height="11.5" rx="2"/><path d="M8.3 11 H11.7"/></svg>
  <div class="a" style="left:1036.5px;top:12px;width:1px;height:38px;background:#3a3944"></div>
  <div class="a" style="left:1041px;top:13px;width:221px;height:36px;background:#4d4c58;border-radius:5px"></div>
  <svg class="a" style="left:1049px;top:23px" width="16" height="16" viewBox="0 0 24 24" fill="#fbfbfe"><path d="M22.282 9.821a5.985 5.985 0 0 0-.516-4.91 6.046 6.046 0 0 0-6.51-2.9A6.065 6.065 0 0 0 4.981 4.18a5.985 5.985 0 0 0-3.998 2.9 6.046 6.046 0 0 0 .743 7.097 5.98 5.98 0 0 0 .51 4.911 6.051 6.051 0 0 0 6.515 2.9A5.985 5.985 0 0 0 13.26 24a6.056 6.056 0 0 0 5.772-4.206 5.99 5.99 0 0 0 3.997-2.9 6.056 6.056 0 0 0-.747-7.073zM13.26 22.43a4.476 4.476 0 0 1-2.876-1.04l.141-.081 4.779-2.758a.795.795 0 0 0 .392-.681v-6.737l2.02 1.168a.071.071 0 0 1 .038.052v5.583a4.504 4.504 0 0 1-4.494 4.494zM3.6 18.304a4.47 4.47 0 0 1-.535-3.014l.142.085 4.783 2.759a.771.771 0 0 0 .78 0l5.843-3.369v2.332a.08.08 0 0 1-.033.062L9.74 19.95a4.5 4.5 0 0 1-6.14-1.646zM2.34 7.896a4.485 4.485 0 0 1 2.366-1.973V11.6a.766.766 0 0 0 .388.676l5.815 3.355-2.02 1.168a.076.076 0 0 1-.071 0l-4.83-2.786A4.504 4.504 0 0 1 2.34 7.872zm16.597 3.855l-5.833-3.387L15.119 7.2a.076.076 0 0 1 .071 0l4.83 2.791a4.494 4.494 0 0 1-.676 8.105v-5.678a.79.79 0 0 0-.407-.667zm2.01-3.023l-.141-.085-4.774-2.782a.776.776 0 0 0-.785 0L9.409 9.23V6.897a.066.066 0 0 1 .028-.061l4.83-2.787a4.5 4.5 0 0 1 6.68 4.66zm-12.64 4.135l-2.02-1.164a.08.08 0 0 1-.038-.057V6.075a4.5 4.5 0 0 1 7.375-3.453l-.142.08L8.704 5.46a.795.795 0 0 0-.393.681zm1.097-2.365l2.602-1.5 2.607 1.5v2.999l-2.597 1.5-2.607-1.5z"/></svg>
  <div class="t" style="left:1071px;top:25px;font-size:11.6px;color:#fbfbfe">Tailwind CSS Probleme</div>
  <svg class="a" style="left:1240px;top:25px" width="12" height="12" fill="none" stroke="#fbfbfe" stroke-width="1.5"><path d="M1.5 1.5 L10.5 10.5 M10.5 1.5 L1.5 10.5"/></svg>
  <svg class="a" style="left:1275px;top:23px" width="16" height="16" fill="none" stroke="#fbfbfe" stroke-width="1.5"><path d="M8 1.5 V14.5 M1.5 8 H14.5"/></svg>
  <svg class="a" style="left:1705px;top:24px" width="16" height="12" fill="none" stroke="#fbfbfe" stroke-width="1.5"><path d="M2 3 L8 9 L14 3"/></svg>
  <div class="a" style="left:1791px;top:30px;width:12px;height:1.3px;background:#fbfbfe"></div>
  <div class="a" style="left:1837.5px;top:25.5px;width:11px;height:11px;border:1.3px solid #fbfbfe"></div>
  <svg class="a" style="left:1882px;top:24px" width="14" height="14" fill="none" stroke="#fbfbfe" stroke-width="1.3"><path d="M1.5 1.5 L12.5 12.5 M12.5 1.5 L1.5 12.5"/></svg>

  <!-- nav bar -->
  <div class="a" style="left:953px;top:53px;width:959px;height:41px;background:#2b2a33;border-bottom:1px solid #4a4952"></div>
  <div class="a" style="left:962px;top:58px;width:32px;height:32px;background:#5b5a66;border-radius:4px"></div>
  <svg class="a" style="left:968px;top:65px" width="20" height="18" fill="none" stroke="#fbfbfe" stroke-width="1.5"><rect x="2.5" y="3" width="15" height="11" rx="1.5"/><rect x="2.5" y="3" width="3.5" height="11" fill="#fbfbfe"/></svg>
  <svg class="a" style="left:1005px;top:65px" width="18" height="18" fill="none" stroke="#fbfbfe" stroke-width="1.5" stroke-linejoin="round" stroke-linecap="round"><path d="M2.5 9 H15.5 M2.5 9 L8 3.5 M2.5 9 L8 14.5"/></svg>
  <svg class="a" style="left:1041px;top:65px" width="18" height="18" fill="none" stroke="#8f8f9d" stroke-width="1.5" stroke-linejoin="round" stroke-linecap="round"><path d="M15.5 9 H2.5 M15.5 9 L10 3.5 M15.5 9 L10 14.5"/></svg>
  <svg class="a" style="left:1077px;top:65px" width="18" height="18" fill="none" stroke="#fbfbfe" stroke-width="1.6" stroke-linecap="round"><path d="M14.8 9.5 A6 6 0 1 1 12.5 4.2"/><path d="M15 2.5 V6.5 H11" stroke-linejoin="round"/></svg>
  <div class="a" style="left:1157px;top:57px;width:588px;height:33px;background:#1c1b22;border-radius:6px"></div>
  <svg class="a" style="left:1164px;top:65px" width="18" height="18" fill="none" stroke="#fbfbfe" stroke-width="1.4" stroke-linejoin="round"><path d="M9 2 L15.5 4.3 C15.5 10.5 13.5 14 9 16.3 C4.5 14 2.5 10.5 2.5 4.3 Z"/></svg>
  <svg class="a" style="left:1193px;top:64px" width="16" height="20" fill="none" stroke="#fbfbfe" stroke-width="1.5"><rect x="2.5" y="9" width="11" height="9" rx="1.5"/><path d="M5 9 V6 A3 3 0 0 1 11 6 V9"/></svg>
  <div class="t" style="left:1219px;top:68px;font-size:13.7px;color:#fbfbfe">chatgpt.com<span style="color:#a8a8b0">/c/68c7d6f3-64ac-8327-b20f-56cc071583ee</span></div>
  <div class="a" style="left:1675px;top:63px;width:35px;height:21px;background:#3d3c47;border-radius:4px"></div>
  <div class="t" style="left:1681px;top:68px;font-size:11px;color:#fbfbfe">80%</div>
  <svg class="a" style="left:1720px;top:64px" width="20" height="20" fill="none" stroke="#fbfbfe" stroke-width="1.5" stroke-linejoin="round"><path d="M10 2.5 L12.3 7.3 L17.5 7.9 L13.6 11.4 L14.7 16.6 L10 14 L5.3 16.6 L6.4 11.4 L2.5 7.9 L7.7 7.3 Z"/></svg>
  <svg class="a" style="left:1806px;top:64px" width="22" height="20" fill="none" stroke="#fbfbfe" stroke-width="1.5"><path d="M15.8 14.5 A7.5 7.5 0 1 1 17 8.5"/><circle cx="9.5" cy="7.5" r="2.2" fill="#fbfbfe"/><path d="M5.5 14.5 C6 11.5 13 11.5 13.5 13.5" /><circle cx="17" cy="15.5" r="2.6" stroke="#b0b0b8" stroke-width="1.3"/></svg>
  <svg class="a" style="left:1843px;top:64px" width="20" height="20" fill="none" stroke="#fbfbfe" stroke-width="1.5" stroke-linejoin="round"><path d="M3 8 H7 V6 A2 2 0 0 1 11 6 V8 H14 V17 H3 V13.5 H5 A1.8 1.8 0 0 0 5 10 H3 Z"/></svg>
  <svg class="a" style="left:1879px;top:65px" width="18" height="18" fill="none" stroke="#fbfbfe" stroke-width="1.5"><path d="M2.5 4.5 H15.5 M2.5 9 H15.5 M2.5 13.5 H15.5"/></svg>

<!--CHAT-->  <!-- chatgpt page -->
  <div class="a" style="left:1004px;top:94px;width:908px;height:938px;background:#212121"></div>
  <div class="a" style="left:1046px;top:94px;width:1px;height:938px;background:#2e2e2e"></div>
  <div class="a" style="left:1004px;top:94px;width:1px;height:938px;background:#3a3a3a"></div>
  <svg class="a" style="left:1017.6px;top:108px" width="16" height="16" viewBox="0 0 24 24" fill="#ececec"><path d="M22.282 9.821a5.985 5.985 0 0 0-.516-4.91 6.046 6.046 0 0 0-6.51-2.9A6.065 6.065 0 0 0 4.981 4.18a5.985 5.985 0 0 0-3.998 2.9 6.046 6.046 0 0 0 .743 7.097 5.98 5.98 0 0 0 .51 4.911 6.051 6.051 0 0 0 6.515 2.9A5.985 5.985 0 0 0 13.26 24a6.056 6.056 0 0 0 5.772-4.206 5.99 5.99 0 0 0 3.997-2.9 6.056 6.056 0 0 0-.747-7.073zM13.26 22.43a4.476 4.476 0 0 1-2.876-1.04l.141-.081 4.779-2.758a.795.795 0 0 0 .392-.681v-6.737l2.02 1.168a.071.071 0 0 1 .038.052v5.583a4.504 4.504 0 0 1-4.494 4.494zM3.6 18.304a4.47 4.47 0 0 1-.535-3.014l.142.085 4.783 2.759a.771.771 0 0 0 .78 0l5.843-3.369v2.332a.08.08 0 0 1-.033.062L9.74 19.950a4.5 4.5 0 0 1-6.140-1.646zM2.34 7.896a4.485 4.485 0 0 1 2.366-1.973V11.6a.766.766 0 0 0 .388.676l5.815 3.355-2.020 1.168a.076.076 0 0 1-.071 0l-4.830-2.786A4.504 4.504 0 0 1 2.340 7.872zm16.597 3.855l-5.833-3.387L15.119 7.2a.076.076 0 0 1 .071 0l4.830 2.791a4.494 4.494 0 0 1-.676 8.105v-5.678a.790.790 0 0 0-.407-.667zm2.010-3.023l-.141-.085-4.774-2.782a.776.776 0 0 0-.785 0L9.409 9.230V6.897a.066.066 0 0 1 .028-.061l4.830-2.787a4.5 4.5 0 0 1 6.680 4.660zm-12.640 4.135l-2.020-1.164a.080.080 0 0 1-.038-.057V6.075a4.5 4.5 0 0 1 7.375-3.453l-.142.080L8.704 5.460a.795.795 0 0 0-.393.681zm1.097-2.365l2.602-1.5 2.607 1.5v2.999l-2.597 1.5-2.607-1.5z"/></svg>
  <svg class="a" style="left:1018px;top:149px" width="15" height="15" fill="none" stroke="#ececec" stroke-width="1.4" stroke-linecap="round" stroke-linejoin="round"><path d="M7 2 H4 A2.5 2.5 0 0 0 1.5 4.5 V11 A2.5 2.5 0 0 0 4 13.5 H10.5 A2.5 2.5 0 0 0 13 11 V8"/><path d="M12 1.8 L13.7 3.5 L7.5 9.7 L5.3 10.2 L5.8 8 Z"/></svg>
  <svg class="a" style="left:1018px;top:178px" width="15" height="15" fill="none" stroke="#ececec" stroke-width="1.4" stroke-linecap="round"><circle cx="6.5" cy="6.5" r="5"/><path d="M10.2 10.2 L13.5 13.5"/></svg>
  <svg class="a" style="left:1017px;top:207px" width="16" height="16" fill="none" stroke="#ececec" stroke-width="1.3" stroke-linejoin="round"><rect x="1.5" y="4.5" width="9.5" height="10" rx="2"/><path d="M5 4.5 V3.5 A2 2 0 0 1 7 1.5 H12.5 A2 2 0 0 1 14.5 3.5 V9 A2 2 0 0 1 12.5 11 H11"/><circle cx="6.2" cy="8.3" r="1.3"/><path d="M1.8 13 L5 10.8 L8 12.5 L11 10"/></svg>
  <svg class="a" style="left:1018px;top:970px" width="15" height="15" fill="none" stroke="#ececec" stroke-width="1.3" stroke-linejoin="round"><path d="M7.5 1.5 C8 5.5 9.5 7 13.5 7.5 C9.5 8 8 9.5 7.5 13.5 C7 9.5 5.5 8 1.5 7.5 C5.5 7 7 5.5 7.5 1.5 Z"/></svg>
  <div class="a" style="left:1015.5px;top:998px;width:19px;height:19px;border-radius:50%;background:#8d9b98"></div>
  <div class="t" style="left:1019px;top:1004px;font-size:8px;color:#e8f0ee">SO</div>

  <!-- header -->
  <div class="t" style="left:1061.5px;top:110.5px;font-size:13.3px;color:#ececec">ChatGPT</div>
  <svg class="a" style="left:1120px;top:111px" width="10" height="10" fill="none" stroke="#a8a8a8" stroke-width="1.2"><path d="M1.5 3 L5 6.5 L8.5 3"/></svg>
  <svg class="a" style="left:1751px;top:108px" width="15" height="15" fill="none" stroke="#ececec" stroke-width="1.3" stroke-linecap="round" stroke-linejoin="round"><path d="M7.5 10 V2 M4.5 4.8 L7.5 1.8 L10.5 4.8 M2 9 V12.5 A1 1 0 0 0 3 13.5 H12 A1 1 0 0 0 13 12.5 V9"/></svg>
  <div class="t" style="left:1772px;top:111px;font-size:10.8px;color:#ececec">Gemeinsam nutzen</div>
  <div class="a" style="left:1885px;top:114px;width:3px;height:3px;border-radius:50%;background:#ececec;box-shadow:5px 0 0 #ececec,10px 0 0 #ececec"></div>

  <!-- content -->
  <div class="ct">
  <div class="bul" style="top:143.5px"></div>
  <div class="t body" style="left:1198px;top:139.4px"><span class="chip">h-full</span> auf beiden Kindern sorgt dafür, dass sie sich auch wirklich dehnen.</div>
  <div class="bul" style="top:166.5px"></div>
  <div class="t body" style="left:1198px;top:162.3px;letter-spacing:0.06px">Damit das Bild nicht verzerrt wird, solltest du <span class="chip">object-cover</span> oder <span class="chip">object-contain</span><span style="letter-spacing:-0.2px"> setzen, je nach</span></div>
  <div class="t body" style="left:1198px;top:185.2px">gewünschtem Verhalten.</div>
  <div class="a" style="left:1336px;top:182px;width:1px;height:17px;background:#ececec"></div>
  <div class="hr" style="top:225px"></div>
  <div class="t" style="left:1172.5px;top:254.4px;font-size:13.9px;font-weight:700;color:#ececec">Nur für Desktop (md und größer)</div>
  <div class="t body" style="left:1172.5px;top:282.2px;letter-spacing:-0.15px">Falls du möchtest, dass die Boxen <b>nur ab Desktop gleich hoch sind</b>, reicht es, die Klassen <span class="chip">md:items-stretch</span></div>
  <div class="t body" style="left:1172.5px;top:305px">und <span class="chip">md:h-full</span> zu verwenden:</div>

  <!-- code block -->
  <div class="a" style="left:1172px;top:330px;width:615px;height:283px;background:#181818;border-radius:8px"></div>
  <div class="t" style="left:1185.5px;top:339.5px;font-size:9.6px;color:#ececec">html</div>
  <svg class="a" style="left:1695px;top:337px" width="12" height="13" fill="none" stroke="#ececec" stroke-width="1.1" stroke-linejoin="round"><rect x="1" y="3.5" width="7.5" height="8.5" rx="1.5"/><path d="M3.5 3.5 V2.5 A1.5 1.5 0 0 1 5 1 H9.5 A1.5 1.5 0 0 1 11 2.5 V8 A1.5 1.5 0 0 1 9.5 9.5 H8.5"/></svg>
  <div class="t" style="left:1711.5px;top:339.5px;font-size:9.6px;color:#ececec">Code kopieren</div>
  <div class="code">
    <div style="top:374px;left:1186.4px"><span class="w">&lt;div </span><span class="r">class</span><span class="w">=</span><span class="g">"grid grid-cols-1 md:grid-cols-2 gap-10 my-20 md:items-stretch"</span><span class="w">&gt;</span></div>
    <div style="top:393.2px;left:1198.4px"><span class="w">&lt;div </span><span class="r">class</span><span class="w">=</span><span class="g">"p-10 rounded-2xl shadow-lg order-2 md:order-1 md:h-full"</span><span class="w">&gt;</span></div>
    <div style="top:412.4px;left:1210.4px"><span class="w">...</span></div>
    <div style="top:431.6px;left:1198.4px"><span class="w">&lt;/div&gt;</span></div>
    <div style="top:450.8px;left:1198.4px"><span class="w">&lt;div </span><span class="r">class</span><span class="w">=</span><span class="g">"order-1 md:order-2 md:h-full"</span><span class="w">&gt;</span></div>
    <div style="top:470px;left:1210.4px"><span class="w">&lt;img</span></div>
    <div style="top:489.2px;left:1222.4px"><span class="r">class</span><span class="w">=</span><span class="g">"w-full md:h-full object-cover rounded-2xl shadow-2xl"</span></div>
    <div style="top:508.4px;left:1222.4px"><span class="r">src</span><span class="w">=</span><span class="g">"/Assets/MedienBerufe_2025-212.jpg"</span></div>
    <div style="top:527.6px;left:1222.4px"><span class="r">alt</span><span class="w">=</span><span class="g">""</span></div>
    <div style="top:546.8px;left:1210.4px"><span class="w">/&gt;</span></div>
    <div style="top:566px;left:1198.4px"><span class="w">&lt;/div&gt;</span></div>
    <div style="top:585.2px;left:1186.4px"><span class="w">&lt;/div&gt;</span></div>
  </div>

  <div class="hr" style="top:636px"></div>
  <div class="t" style="left:1173px;top:664px;font-size:13px">&#x1F449;</div>
  <div class="t body" style="left:1193.3px;top:665px">So erreichst du:</div>
  <div class="bul" style="top:695.5px"></div>
  <div class="t body" style="left:1198.3px;top:691.3px">Auf Mobile: Textbox und Bild passen sich ihrer eigenen Höhe an.</div>
  <div class="bul" style="top:717.7px"></div>
  <div class="t body" style="left:1198.3px;top:713.5px">Auf Desktop (<span class="chip">md:</span>): beide Boxen haben exakt dieselbe Höhe.</div>
  <div class="hr" style="top:753px"></div>
  <div class="t body" style="left:1172.5px;top:782.5px;letter-spacing:0.08px">Soll ich dir deinen kompletten Abschnitt aus <span class="chip">arbeitsweise.html</span><span style="letter-spacing:-0.13px"> so umschreiben, dass alle Text+Bild-Paare</span></div>
  <div class="t body" style="left:1172.5px;top:805px">automatisch gleich hoch sind ab Desktop?</div>
  </div>

  <!-- action icons -->
  <svg class="a" style="left:1172px;top:834px" width="150" height="16" fill="none" stroke="#b4b4b4" stroke-width="1.3" stroke-linejoin="round" stroke-linecap="round">
    <rect x="2" y="5" width="8" height="9" rx="2"/><path d="M5 5 V4 A2 2 0 0 1 7 2 H12 A2 2 0 0 1 14 4 V9 A2 2 0 0 1 12 11 H10"/>
    <path d="M28.5 7.5 V14 H30 M30 7.5 L32.5 2.5 C34 2.5 34.5 3.5 34.3 5 L34 7 H38 A1.3 1.3 0 0 1 39.2 8.6 L38 13 A1.5 1.5 0 0 1 36.6 14 H30 V7.5 H28.5"/>
    <path d="M54.5 8.5 V2 H56 M56 8.5 L58.5 13.5 C60 13.5 60.5 12.5 60.3 11 L60 9 H64 A1.3 1.3 0 0 0 65.2 7.4 L64 3 A1.5 1.5 0 0 0 62.6 2 H56 V8.5 H54.5"/>
    <path d="M85 10 V2 M82 5 L85 2 L88 5 M79.5 9 V12.5 A1 1 0 0 0 80.5 13.5 H89.5 A1 1 0 0 0 90.5 12.5 V9"/>
    <path d="M104.5 7 A5.5 5.5 0 0 1 114.5 4 M116 9 A5.5 5.5 0 0 1 106 12 M114.8 1.5 V4.3 H112 M105.7 14.5 V11.7 H108.5"/>
  </svg>
  <div class="a" style="left:1303px;top:840.5px;width:2.4px;height:2.4px;border-radius:50%;background:#b4b4b4;box-shadow:4.5px 0 0 #b4b4b4,9px 0 0 #b4b4b4"></div>

  <!-- scrollbar -->
  <svg class="a" style="left:1897px;top:139px" width="12" height="10" fill="none" stroke="#3e3e3e" stroke-width="1.3"><path d="M2 7 L6 3 L10 7"/></svg>
  <div class="a" style="left:1895px;top:919px;width:17px;height:47px;background:#3c3c3c"></div>

  <!-- composer -->
  <div class="a" style="left:1171.5px;top:962.5px;width:616px;height:44px;background:#303030;border-radius:22px"></div>
  <svg class="a" style="left:1187px;top:977px" width="14" height="14" fill="none" stroke="#e0e0e0" stroke-width="1.3" stroke-linecap="round"><path d="M7 1.5 V12.5 M1.5 7 H12.5"/></svg>
  <div class="t" style="left:1214px;top:977.5px;font-size:12.6px;color:#d8d8d8">Stelle irgendeine Frage</div>
  <svg class="a" style="left:1724px;top:975px" width="14" height="18" fill="none" stroke="#e0e0e0" stroke-width="1.3" stroke-linecap="round"><rect x="4.5" y="1.5" width="5" height="9" rx="2.5"/><path d="M2 8 A5 5 0 0 0 12 8 M7 13 V16 M5 16 H9"/></svg>
  <div class="a" style="left:1750px;top:970px;width:28px;height:28px;border-radius:50%;background:#3d3d3d"></div>
  <svg class="a" style="left:1757px;top:977px" width="14" height="14" fill="none" stroke="#e0e0e0" stroke-width="1.3" stroke-linecap="round"><path d="M1.5 6 V8 M4.5 3.5 V10.5 M7.5 5.5 V8.5 M10.5 4.5 V9.5"/></svg>
  <div class="t" style="left:1275px;top:1015px;font-size:9.45px;color:#ececec">ChatGPT kann Fehler machen. Überprüfe wichtige Informationen. Siehe <span style="text-decoration:underline">Cookie-Voreinstellungen</span>.</div>
<!--/CHAT-->
  <!-- firefox sidebar -->
  <div class="a" style="left:953px;top:94px;width:51px;height:938px;background:#2b2a33"></div>
  <svg class="a" style="left:966px;top:101px" width="30" height="30" fill="none" stroke="#fbfbfe" stroke-width="1.5" stroke-linejoin="round"><path d="M15 9 C15.5 13 17 14.5 21 15.5 C17 16.5 15.5 18 15 22 C14.5 18 13 16.5 9 15.5 C13 14.5 14.5 13 15 9 Z"/><circle cx="8" cy="10" r="1.3" fill="#cfcfd6" stroke="none"/><circle cx="8" cy="22" r="1.3" fill="#cfcfd6" stroke="none"/><circle cx="24" cy="6" r="3.2" fill="#3fe1b0" stroke="none"/></svg>
  <svg class="a" style="left:972px;top:146px" width="18" height="16" fill="none" stroke="#fbfbfe" stroke-width="1.5" stroke-linejoin="round"><rect x="1.5" y="1.5" width="8" height="5" rx="1.5"/><path d="M9.5 3.5 H13.5 V11 M3.5 6.5 V11"/><path d="M0.8 12 H16.2 L15 14.5 H2 Z" fill="#fbfbfe"/></svg>
  <svg class="a" style="left:971px;top:179px" width="18" height="18" fill="none" stroke="#fbfbfe" stroke-width="1.5" stroke-linecap="round"><circle cx="9" cy="9" r="7.2"/><path d="M8.5 5 V9.5 L11.5 11.5"/></svg>
  <svg class="a" style="left:971px;top:214px" width="18" height="18" fill="none" stroke="#fbfbfe" stroke-width="1.5" stroke-linejoin="round"><path d="M9 1.8 L11.2 6.5 L16.3 7.1 L12.5 10.6 L13.5 15.7 L9 13.1 L4.5 15.7 L5.5 10.6 L1.7 7.1 L6.8 6.5 Z"/></svg>
  <svg class="a" style="left:971px;top:1001px" width="18" height="18" fill="none" stroke="#fbfbfe" stroke-width="1.5" stroke-linejoin="round"><path d="M6.72 3.89 L7.49 1.55 L10.51 1.55 L11.28 3.89 L12.29 4.47 L14.70 3.97 L16.21 6.58 L14.57 8.42 L14.57 9.58 L16.21 11.42 L14.70 14.03 L12.29 13.53 L11.28 14.11 L10.51 16.45 L7.49 16.45 L6.72 14.11 L5.71 13.53 L3.30 14.03 L1.79 11.42 L3.43 9.58 L3.43 8.42 L1.79 6.58 L3.30 3.97 L5.71 4.47 Z"/><circle cx="9" cy="9" r="2.3"/></svg>
</div>
</div>
<!--/BROWSER-->
</body></html>
